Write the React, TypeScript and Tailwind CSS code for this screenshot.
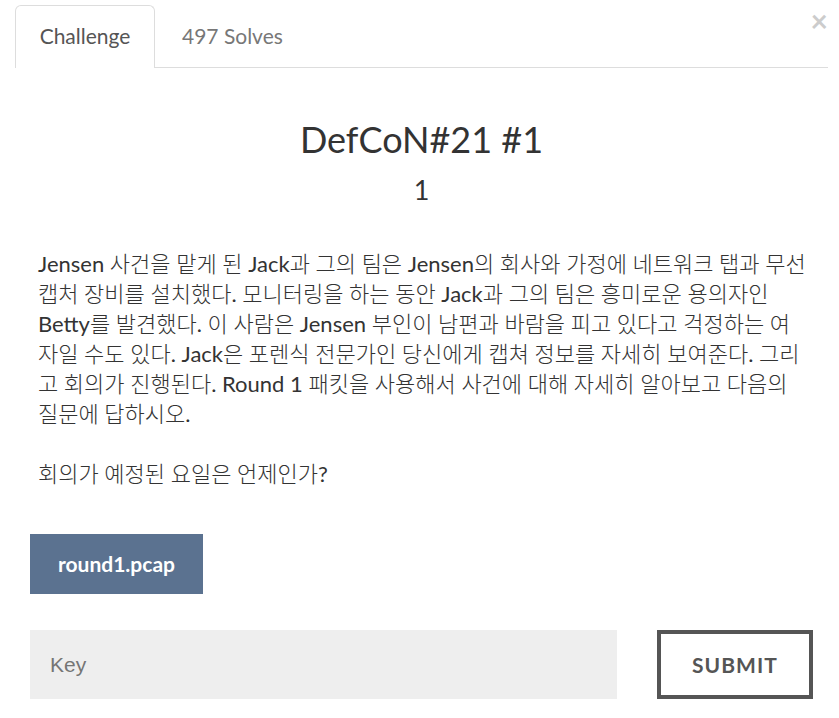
import { useState } from "react";

const scenario =
  "Jensen 사건을 맡게 된 Jack과 그의 팀은 Jensen의 회사와 가정에 네트워크 탭과 무선 캡처 장비를 설치했다. 모니터링을 하는 동안 Jack과 그의 팀은 흥미로운 용의자인 Betty를 발견했다. 이 사람은 Jensen 부인이 남편과 바람을 피고 있다고 걱정하는 여자일 수도 있다. Jack은 포렌식 전문가인 당신에게 캡쳐 정보를 자세히 보여준다. 그리고 회의가 진행된다. Round 1 패킷을 사용해서 사건에 대해 자세히 알아보고 다음의 질문에 답하시오.";
const question = "회의가 예정된 요일은 언제인가?";

export default function App() {
  const [key, setKey] = useState("");
  return (
    <main className="bg-white pt-[5px] pl-[15px] font-[Lato,'Noto_Sans_CJK_KR',sans-serif] text-[#333]">
      <div className="mr-[11px] flex h-[63px] border-b border-[#ddd]">
        <nav className="flex flex-1">
          <button type="button" className="-mb-px w-[140px] rounded-t-md border border-b-0 border-[#ddd] bg-white pb-0.5 text-[21px] text-[#555]">
            Challenge
          </button>
          <button type="button" className="px-[27px] text-[21px] text-[#777]">
            497 Solves
          </button>
        </nav>
        <button type="button" aria-label="Close" className="h-[30px] text-[30px] leading-[30px] font-bold text-[#ccc]">
          ×
        </button>
      </div>

      <header className="mr-[11px] pt-[47px] text-center">
        <h1 className="text-[36px] leading-[48px]">DefCoN#21 #1</h1>
        <h2 className="mt-[9px] text-[27px] leading-[36px]">1</h2>
      </header>

      <section className="mt-[41px] pr-8 pl-[23px] font-[Lato,'Noto_Sans_CJK_KR_Light','Noto_Sans_CJK_KR',sans-serif] text-[22px] leading-[30px]">
        <p>{scenario}</p>
        <p className="mt-[30px]">{question}</p>
      </section>

      <div className="mt-[45px] pl-[15px]">
        <a href="#round1" className="inline-flex h-[60px] w-[173px] items-center justify-center bg-[#5b7290] text-[21px] font-bold text-white">
          round1.pcap
        </a>
      </div>

      <form className="mt-9 flex gap-10 pr-[26px] pl-[15px]" onSubmit={(e) => e.preventDefault()}>
        <input
          aria-label="Key"
          placeholder="Key"
          value={key}
          onChange={(e) => setKey(e.target.value)}
          className="h-[69px] min-w-0 flex-1 bg-[#eee] px-5 font-['Liberation_Sans',Arial,sans-serif] text-[21px] placeholder:text-[#757575]"
        />
        <button type="submit" className="h-[69px] w-[156px] border-4 border-[#555] text-[21px] font-bold tracking-wider text-[#555]">
          SUBMIT
        </button>
      </form>
    </main>
  );
}
